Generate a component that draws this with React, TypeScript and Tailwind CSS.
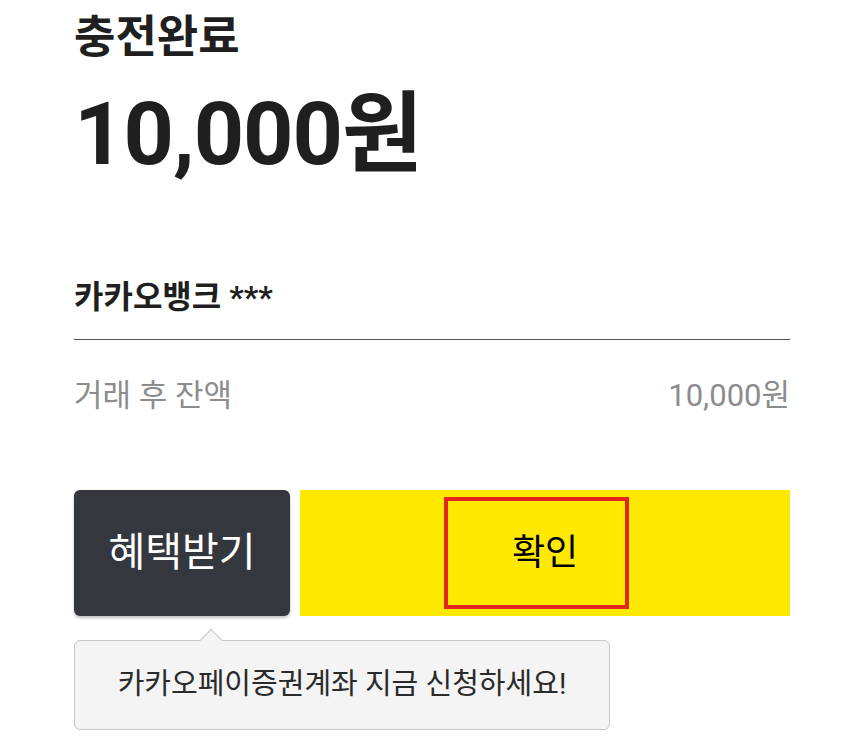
export default function App() {
  const font = { fontFamily: 'Roboto, "Noto Sans CJK KR", sans-serif' };
  return (
    <div className="min-h-[750px] w-[864px] bg-white px-[74px]" style={font}>
      <h1 className="pt-[10px] text-[45px] font-bold leading-[56px] text-[#1f1f1f]">충전완료</h1>
      <div className="mt-[20px] text-[88px] font-bold leading-[96px] tracking-[-1px] text-[#1f1f1f]">
        10,000원
      </div>

      <div className="mt-[95px] text-[32px] font-bold leading-[40px] text-[#1f1f1f]">카카오뱅크 ***</div>
      <div className="mt-[22px] h-px bg-[#555]" />

      <div className="mt-[36px] flex items-center justify-between text-[31px] leading-[40px] text-[#8c8c8c]">
        <span>거래 후 잔액</span>
        <span>10,000원</span>
      </div>

      <div className="mt-[74px] flex h-[126px] gap-[10px]">
        <button className="flex w-[216px] items-center justify-center rounded-[6px] bg-[#34373d] text-[40px] text-white shadow-[0_2px_3px_rgba(0,0,0,0.25)]">
          혜택받기
        </button>
        <div className="flex flex-1 items-center justify-center bg-[#ffe900]">
          <button className="mr-[18px] flex h-[112px] w-[185px] items-center justify-center border-[4px] border-[#e3241f] pl-[18px] text-[36px] text-black">
            확인
          </button>
        </div>
      </div>

      <div className="relative mt-[24px] w-[536px]">
        <div className="absolute left-[129px] top-[-8px] h-[16px] w-[16px] rotate-45 border-l border-t border-[#c8c8c8] bg-[#f4f4f4]" />
        <div className="flex h-[90px] items-center justify-center rounded-[6px] border border-[#c8c8c8] bg-[#f4f4f4] text-[29px] text-[#2a2a2a]">
          카카오페이증권계좌 지금 신청하세요!
        </div>
        <div className="absolute left-[130px] top-[1px] h-[2px] w-[14px] bg-[#f4f4f4]" />
      </div>
    </div>
  );
}
